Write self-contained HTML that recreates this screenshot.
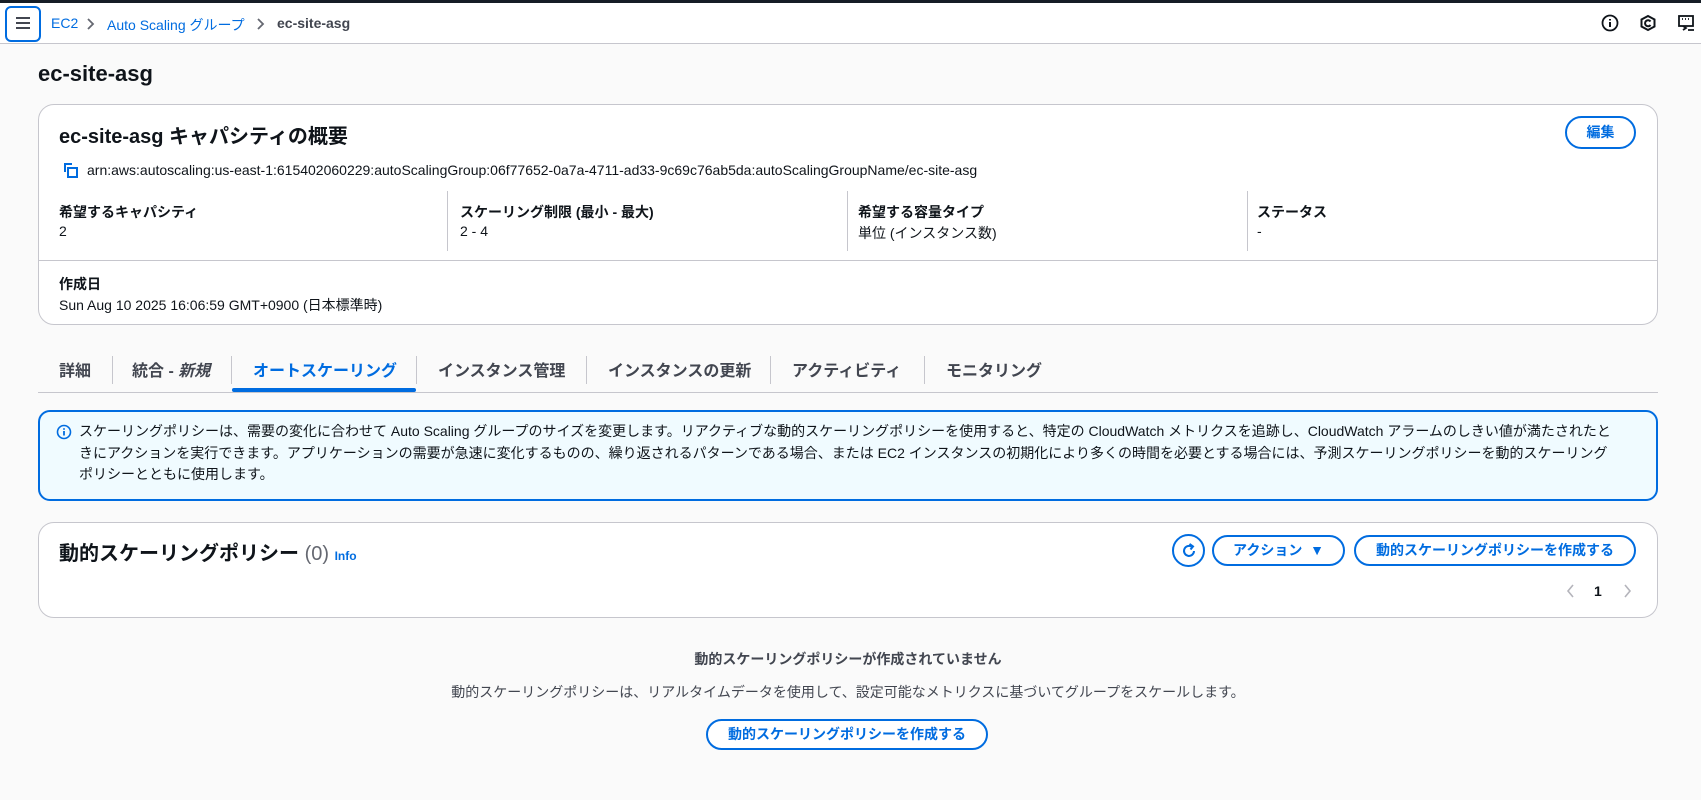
<!DOCTYPE html>
<html><head><meta charset="utf-8">
<style>
*{box-sizing:border-box;margin:0;padding:0}
body{width:1701px;height:800px;overflow:hidden;background:#fafafa;font-family:"Liberation Sans","Noto Sans CJK JP",sans-serif;color:#0f141a;position:relative;font-size:14px}
.a{position:absolute;white-space:nowrap}
.top{position:absolute;left:0;top:0;width:1701px;height:44px;background:#fff;border-bottom:1px solid #c6c6cd;border-top:3px solid #161d26}
.card{position:absolute;background:#fff;border:1px solid #c6c6cd;border-radius:16px}
.lbl{font-weight:bold;font-size:14px}
.vline{position:absolute;width:1px;background:#c6c6cd}
.tab{position:absolute;top:357px;font-size:16px;font-weight:bold;color:#424650}
.btn{position:absolute;border:2px solid #006ce0;border-radius:20px;color:#006ce0;font-weight:bold;font-size:14px;text-align:center;background:#fff}
a{color:#006ce0}
</style></head><body>
<div class="top"></div>
<div class="a" style="left:5px;top:6px;width:36px;height:36px;border:2px solid #006ce0;border-radius:6px"></div>
<svg class="a" style="left:14px;top:15px" width="18" height="16"><path d="M2 3h14M2 8h14M2 13h14" stroke="#424650" stroke-width="2"/></svg>
<div class="a" style="left:51px;top:15px;font-size:14px"><a>EC2</a></div>
<svg class="a" style="left:85px;top:17px" width="12" height="14"><path d="M3 2l5 5-5 5" fill="none" stroke="#656871" stroke-width="1.8"/></svg>
<div class="a" style="left:107px;top:15px;font-size:14px"><a>Auto Scaling グループ</a></div>
<svg class="a" style="left:255px;top:17px" width="12" height="14"><path d="M3 2l5 5-5 5" fill="none" stroke="#656871" stroke-width="1.8"/></svg>
<div class="a" style="left:277px;top:15px;font-size:14px;color:#424650;font-weight:bold">ec-site-asg</div>
<svg class="a" style="left:1601px;top:14px" width="18" height="18"><circle cx="9" cy="9" r="7.5" fill="none" stroke="#0f141a" stroke-width="1.8"/><path d="M9 8v5M9 5v1.5" stroke="#0f141a" stroke-width="2"/></svg>
<svg class="a" style="left:1639px;top:14px" width="18" height="18"><path d="M9 2l6.5 3.5v7L9 16 2.5 12.5v-7z" fill="none" stroke="#0f141a" stroke-width="2"/><path d="M11.5 7.5A3 3 0 1 0 11.5 11" fill="none" stroke="#0f141a" stroke-width="2"/></svg>
<svg class="a" style="left:1677px;top:14px" width="20" height="18"><rect x="2" y="2" width="14" height="10" fill="none" stroke="#0f141a" stroke-width="1.8"/><path d="M5 5h1M8 5h1M11 5h1M6 12l3 2-3 2M11 16h6" stroke="#0f141a" stroke-width="1.8" fill="none"/></svg>

<div class="a" style="left:38px;top:61px;font-size:22px;font-weight:bold">ec-site-asg</div>

<div class="card" style="left:38px;top:104px;width:1620px;height:221px"></div>
<div class="a" style="left:59px;top:120px;font-size:20px;font-weight:bold">ec-site-asg キャパシティの概要</div>
<div class="btn" style="left:1565px;top:116px;width:71px;height:33px;line-height:29px">編集</div>
<svg class="a" style="left:63px;top:162px" width="16" height="17"><path d="M2 1v9" stroke="#006ce0" stroke-width="2"/><path d="M1 2h8" stroke="#006ce0" stroke-width="2"/><rect x="5" y="6" width="9" height="9" fill="none" stroke="#006ce0" stroke-width="2"/></svg>
<div class="a" style="left:87px;top:162px;font-size:14px">arn:aws:autoscaling:us-east-1:615402060229:autoScalingGroup:06f77652-0a7a-4711-ad33-9c69c76ab5da:autoScalingGroupName/ec-site-asg</div>
<div class="a lbl" style="left:59px;top:202px">希望するキャパシティ</div><div class="a" style="left:59px;top:223px">2</div>
<div class="vline" style="left:447px;top:191px;height:60px"></div>
<div class="a lbl" style="left:460px;top:202px">スケーリング制限 (最小 - 最大)</div><div class="a" style="left:460px;top:223px">2 - 4</div>
<div class="vline" style="left:847px;top:191px;height:60px"></div>
<div class="a lbl" style="left:858px;top:202px">希望する容量タイプ</div><div class="a" style="left:858px;top:223px">単位 (インスタンス数)</div>
<div class="vline" style="left:1247px;top:191px;height:60px"></div>
<div class="a lbl" style="left:1257px;top:202px">ステータス</div><div class="a" style="left:1257px;top:223px">-</div>
<div class="a" style="left:39px;top:260px;width:1618px;height:1px;background:#c6c6cd"></div>
<div class="a lbl" style="left:59px;top:274px">作成日</div>
<div class="a" style="left:59px;top:295px">Sun Aug 10 2025 16:06:59 GMT+0900 (日本標準時)</div>

<div class="a" style="left:38px;top:392px;width:1620px;height:1px;background:#c6c6cd"></div>
<div class="tab" style="left:59px">詳細</div>
<div class="vline" style="left:112px;top:356px;height:28px"></div>
<div class="tab" style="left:132px">統合 - <i>新規</i></div>
<div class="vline" style="left:231px;top:356px;height:28px"></div>
<div class="tab" style="left:253px;color:#006ce0">オートスケーリング</div>
<div class="a" style="left:232px;top:388px;width:184px;height:4px;background:#006ce0;border-radius:2px"></div>
<div class="vline" style="left:416px;top:356px;height:28px"></div>
<div class="tab" style="left:438px">インスタンス管理</div>
<div class="vline" style="left:586px;top:356px;height:28px"></div>
<div class="tab" style="left:608px">インスタンスの更新</div>
<div class="vline" style="left:770px;top:356px;height:28px"></div>
<div class="tab" style="left:792px">アクティビティ</div>
<div class="vline" style="left:924px;top:356px;height:28px"></div>
<div class="tab" style="left:946px">モニタリング</div>

<div class="a" style="left:38px;top:410px;width:1620px;height:91px;border:2px solid #006ce0;border-radius:12px;background:#f0fbff"></div>
<svg class="a" style="left:56px;top:424px" width="16" height="16"><circle cx="8" cy="8" r="6.5" fill="none" stroke="#006ce0" stroke-width="1.6"/><path d="M8 7v4.5M8 4.3v1.4" stroke="#006ce0" stroke-width="1.8"/></svg>
<div class="a" style="left:79px;top:421px;font-size:14px;line-height:21.5px;white-space:normal;width:1540px">スケーリングポリシーは、需要の変化に合わせて Auto Scaling グループのサイズを変更します。リアクティブな動的スケーリングポリシーを使用すると、特定の CloudWatch メトリクスを追跡し、CloudWatch アラームのしきい値が満たされたときにアクションを実行できます。アプリケーションの需要が急速に変化するものの、繰り返されるパターンである場合、または EC2 インスタンスの初期化により多くの時間を必要とする場合には、予測スケーリングポリシーを動的スケーリングポリシーとともに使用します。</div>

<div class="card" style="left:38px;top:522px;width:1620px;height:96px"></div>
<div class="a" style="left:59px;top:537px;font-size:20px;font-weight:bold">動的スケーリングポリシー <span style="font-weight:normal;color:#656871">(0)</span> <a style="font-size:12px;font-weight:bold">Info</a></div>
<div class="a" style="left:1172px;top:534px;width:33px;height:33px;border:2px solid #006ce0;border-radius:50%"></div>
<svg class="a" style="left:1180px;top:542px" width="18" height="18"><path d="M14 9A5 5 0 1 1 11.5 4.6" fill="none" stroke="#006ce0" stroke-width="2"/><path d="M9.5 2l3.5 2.5-2.5 3" fill="none" stroke="#006ce0" stroke-width="2"/></svg>
<div class="btn" style="left:1212px;top:535px;width:133px;height:31px;line-height:27px">アクション &nbsp;▼</div>
<div class="btn" style="left:1354px;top:535px;width:282px;height:31px;line-height:27px">動的スケーリングポリシーを作成する</div>
<svg class="a" style="left:1565px;top:583px" width="12" height="16"><path d="M8 2L3 8l5 6" fill="none" stroke="#b4b4bb" stroke-width="1.6"/></svg>
<div class="a" style="left:1594px;top:583px;font-weight:bold">1</div>
<svg class="a" style="left:1621px;top:583px" width="12" height="16"><path d="M4 2l5 6-5 6" fill="none" stroke="#b4b4bb" stroke-width="1.6"/></svg>

<div class="a" style="left:38px;top:649px;width:1620px;text-align:center;font-weight:bold;color:#424650">動的スケーリングポリシーが作成されていません</div>
<div class="a" style="left:38px;top:682px;width:1620px;text-align:center;color:#424650">動的スケーリングポリシーは、リアルタイムデータを使用して、設定可能なメトリクスに基づいてグループをスケールします。</div>
<div class="btn" style="left:706px;top:719px;width:282px;height:31px;line-height:27px">動的スケーリングポリシーを作成する</div>
</body></html>
